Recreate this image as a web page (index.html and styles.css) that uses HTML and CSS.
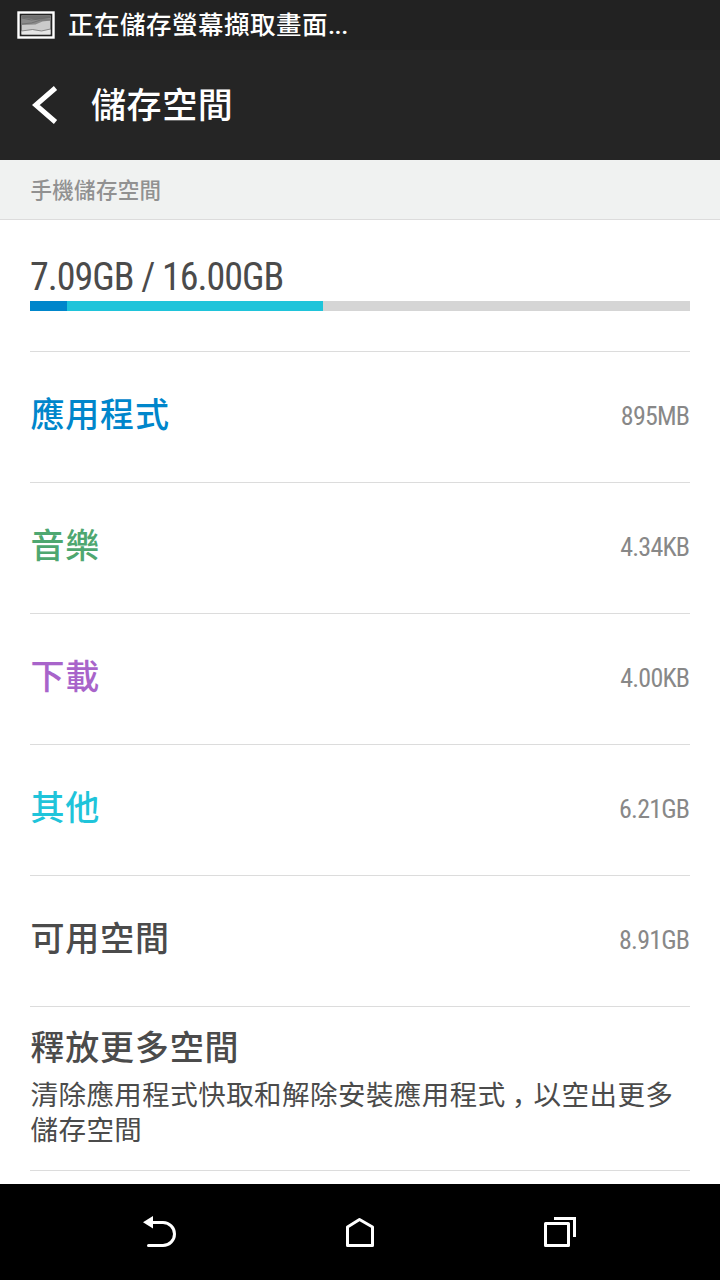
FILE: index.html
```html
<!DOCTYPE html>
<html lang="zh-Hant">
<head>
    <meta charset="UTF-8">
    <meta name="viewport" content="width=device-width, initial-scale=1.0">
    <title>儲存空間</title>
    <link rel="stylesheet" href="styles.css">
</head>
<body>
    <div class="statusBar">
        <svg class="shotIcon" width="38" height="28" viewBox="0 0 38 28">
            <rect x="1.5" y="1.5" width="35" height="25" fill="#222" stroke="#fff" stroke-width="2.4"/>
            <rect x="4.5" y="4.5" width="29" height="19" fill="#cacaca"/>
            <path d="M4.5 4.5h29v5l-8 1-7 3-14 0.5z" fill="#8b8b8b"/>
            <path d="M4.5 4.5h29v2l-15 2-14-2z" fill="#707070"/>
            <path d="M4.5 20l11-1 9 1 9-1.500v5h-29z" fill="#e6e6e6"/>
            <path d="M4.500 7l10 2 19-2.500M4.500 13l10-1 9-3 10 0M4.500 20l11-1.500 9 1.500 9-2" fill="none" stroke="#666" stroke-width="0.7"/>
        </svg>
        <span class="statusText">正在儲存螢幕擷取畫面<span class="dots">...</span></span>
    </div>
    <div class="header">
        <svg class="back" width="26" height="38" viewBox="0 0 26 38">
            <path d="M23.500 2L3.800 19l19.700 17" fill="none" stroke="#fff" stroke-width="5"/>
        </svg>
        <h1 class="title">儲存空間</h1>
    </div>
    <div class="section">手機儲存空間</div>
    <div class="content">
        <div class="usage">
            <div class="total condensed">7.09GB / 16.00GB</div>
            <div class="bar">
                <div class="apps"></div>
                <div class="other"></div>
            </div>
        </div>
        <div class="row"><span class="label blue">應用程式</span><span class="value condensed">895MB</span></div>
        <div class="row"><span class="label green">音樂</span><span class="value condensed">4.34KB</span></div>
        <div class="row"><span class="label purple">下載</span><span class="value condensed">4.00KB</span></div>
        <div class="row"><span class="label cyan">其他</span><span class="value condensed">6.21GB</span></div>
        <div class="row"><span class="label">可用空間</span><span class="value condensed">8.91GB</span></div>
        <div class="more">
            <div class="label">釋放更多空間</div>
            <p class="desc">清除應用程式快取和解除安裝應用程式<span class="comma" lang="ja">，</span>以空出更多<br>儲存空間</p>
        </div>
    </div>
    <div class="navBar">
        <svg width="40" height="40" viewBox="0 0 40 40">
            <path d="M12 10.500h11a11.500 11.500 0 0 1 0 23H8.500" fill="none" stroke="#fff" stroke-width="3" stroke-linecap="round"/>
            <path d="M3 10.300L13 4v12.500z" fill="#fff"/>
        </svg>
        <svg width="40" height="40" viewBox="0 0 40 40">
            <path d="M7.500 15L19.500 7.500l13 7.500v18.500h-25z" fill="none" stroke="#fff" stroke-width="3" stroke-linejoin="round"/>
        </svg>
        <svg width="40" height="40" viewBox="0 0 40 40">
            <rect x="5.500" y="11.500" width="23" height="22" fill="none" stroke="#fff" stroke-width="3" stroke-linejoin="round"/>
            <path d="M14 6.500h20.500V25" fill="none" stroke="#fff" stroke-width="3"/>
        </svg>
    </div>
</body>
</html>
```

FILE: styles.css
```css
:root{
    --lineColor: #dcdcdc;
    --fontColor: #4b4b4b;
    --padding: 30px;
}
*{
    box-sizing: border-box;
}
body{
    display: flex;
    flex-direction: column;
    width: 720px;
    height: 1280px;
    margin: 0;
    overflow: hidden;
    background: #fff;
    color: var(--fontColor);
    font-family: "Noto Sans CJK TC", sans-serif;
}
.statusBar{
    display: flex;
    align-items: center;
    height: 50px;
    padding-left: 17px;
    background: #222;
    color: #fff;
}
.statusText{
    margin-left: 13px;
    padding-bottom: 3px;
    font-size: 25.5px;
    font-weight: 500;
    letter-spacing: 0.5px;
    line-height: 48px;
}
.dots{
    font-family: Roboto, sans-serif;
    letter-spacing: -0.5px;
}
.header{
    display: flex;
    align-items: center;
    height: 110px;
    padding-left: 32px;
    background: #252525;
    color: #fff;
}
.title{
    margin: 0 0 0 33px;
    padding-bottom: 4px;
    font-size: 35px;
    font-weight: 500;
    letter-spacing: 0.6px;
    line-height: 50px;
}
.section{
    height: 60px;
    padding-left: calc(var(--padding) + 0.5px);
    background: #f0f2f1;
    border-bottom: 1px solid var(--lineColor);
    color: #919191;
    font-size: 21.5px;
    font-weight: 500;
    letter-spacing: 0.3px;
    line-height: 58px;
}
.content{
    flex: 1;
    padding: 0 var(--padding);
}
.condensed{
    font-family: "Roboto Condensed", Roboto, sans-serif;
    font-stretch: 75%;
}
.usage{
    height: 132px;
    padding-top: 34px;
    border-bottom: 1px solid var(--lineColor);
}
.total{
    font-size: 38px;
    letter-spacing: -1px;
    line-height: 47px;
}
.bar{
    display: flex;
    height: 10px;
    background: #d5d5d5;
}
.apps{
    width: 37px;
    background: #0086cb;
}
.other{
    width: 256px;
    background: #1fc4da;
}
.row{
    display: flex;
    align-items: center;
    justify-content: space-between;
    height: 131px;
    padding-bottom: 3px;
    border-bottom: 1px solid var(--lineColor);
}
.label{
    padding: 0 0 6px 0.5px;
    font-size: 34px;
    font-weight: 500;
    letter-spacing: 0.8px;
    line-height: 50px;
}
.blue{
    color: #0086cb;
}
.green{
    color: #4ea770;
}
.purple{
    color: #a864ca;
}
.cyan{
    color: #1fc4da;
}
.value{
    padding-right: 0.8px;
    color: #888;
    font-size: 26px;
    letter-spacing: -0.8px;
}
.more{
    height: 164px;
    padding-top: 14px;
    border-bottom: 1px solid var(--lineColor);
}
.more .label{
    padding-bottom: 0;
}
.desc{
    margin: 5px 0 0 0.5px;
    font-size: 27.5px;
    letter-spacing: 0.45px;
    line-height: 35px;
}
.comma{
    padding-left: 6px;
    margin-right: -6px;
    font-family: "Noto Sans CJK JP", sans-serif;
}
.navBar{
    display: flex;
    align-items: center;
    justify-content: center;
    gap: 160px;
    height: 96px;
    background: #000;
}
```
